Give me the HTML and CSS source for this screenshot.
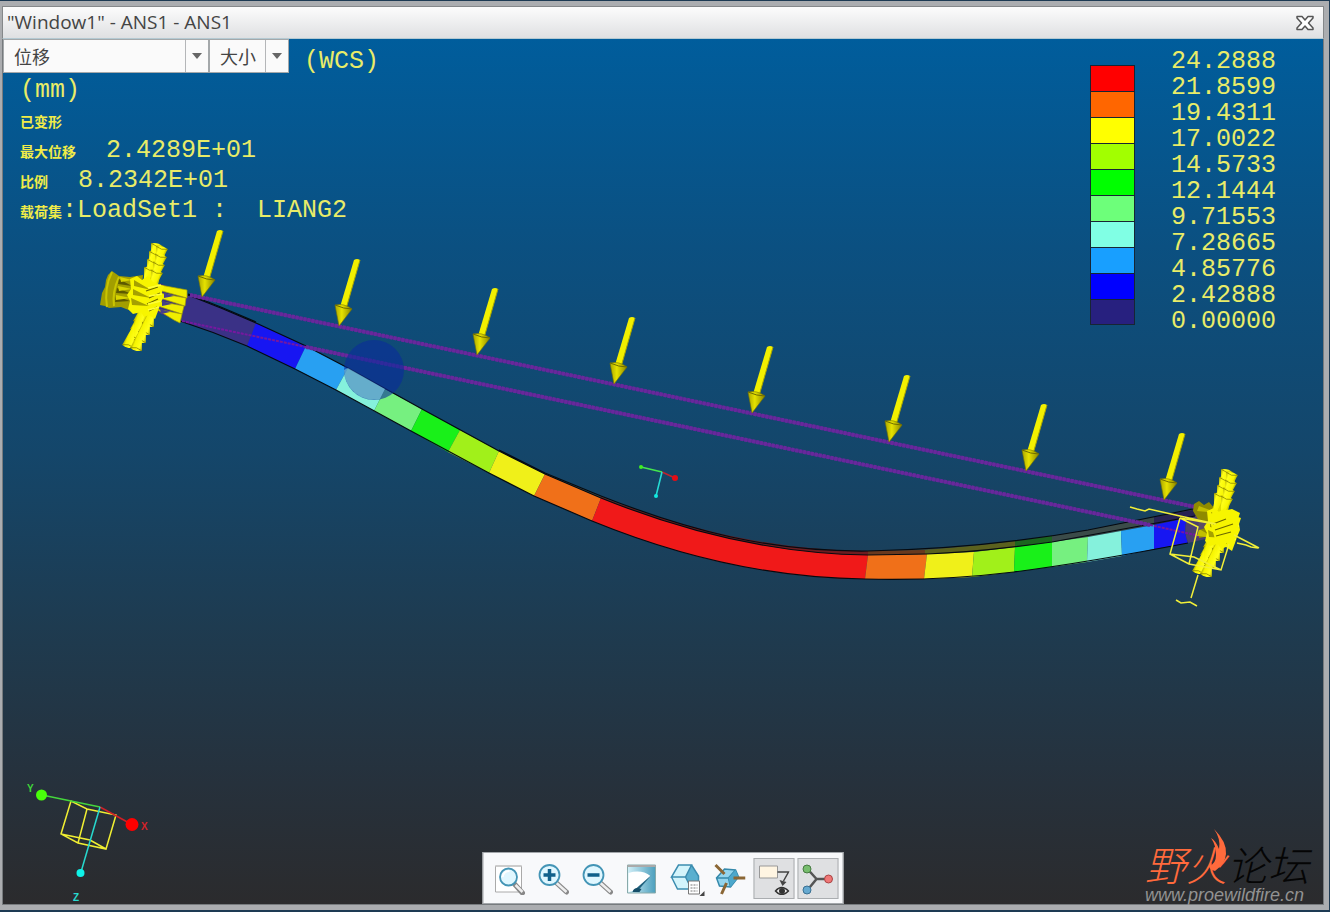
FILE: index.html
```html
<!DOCTYPE html>
<html lang="zh-CN">
<head>
  <meta charset="UTF-8">
  <meta name="viewport" content="width=device-width, initial-scale=1.0">
  <title>"Window1" - ANS1 - ANS1</title>
  <link rel="stylesheet" href="styles.css">
</head>
<body>
  <div class="window">
    <header class="titlebar">
      <h1>"Window1" - ANS1 - ANS1</h1>
      <button type="button" class="close" aria-label="关闭">
        <svg width="18" height="16" viewBox="0 0 18 16"><path d="M1 1.500H6L9 5L12 1.500H17V3L12.500 8L17 13V14.500H12L9 11L6 14.500H1V13L5.500 8L1 3Z" fill="#fff" stroke="#555" stroke-width="1.500" stroke-linejoin="round"/></svg>
      </button>
    </header>

    <main class="viewport">
      <!-- 三维模型 -->
      <svg class="scene" viewBox="3 39 1320 865" aria-hidden="true">
        <defs>
          <linearGradient id="rod" x1="0" x2="1" y1="0" y2=".25">
            <stop offset="0" stop-color="#b5b000"/>
            <stop offset=".3" stop-color="#ffff18"/>
            <stop offset=".75" stop-color="#f6f400"/>
            <stop offset="1" stop-color="#9c9800"/>
          </linearGradient>
          <linearGradient id="head" x1="0" x2="1">
            <stop offset="0" stop-color="#aaa600"/>
            <stop offset=".4" stop-color="#e6e200"/>
            <stop offset="1" stop-color="#8a8600"/>
          </linearGradient>
          <g id="load">
            <path d="M217 231Q220 229 223 231L209 280L203 278Z" fill="#f2f000"/>
            <path d="M223 231L209 280" stroke="#a8a400"/>
            <path d="M198 276Q207 274 215 280L202 297Z" fill="url(#head)" stroke="#777300" stroke-width=".6"/>
            <path d="M198 276Q207 280 215 280" fill="none" stroke="#6f6c00"/>
          </g>
          <g id="cone">
            <path d="M0 0L-6 -23Q0 -26 6 -23Z" fill="url(#rod)"/>
            <path d="M-6 -23Q0 -20 6 -23" fill="none" stroke="#858100" stroke-width=".7"/>
          </g>
          <g id="stack">
            <path d="M152 246L166 250L157 289L142 285Z" fill="#dedb00"/>
            <use href="#cone" transform="translate(151 267) rotate(15)"/>
            <use href="#cone" transform="translate(149 275) rotate(15)"/>
            <use href="#cone" transform="translate(147 283) rotate(15)"/>
            <use href="#cone" transform="translate(144 291) rotate(15)"/>
            <use href="#cone" transform="translate(156 270) rotate(15)"/>
            <use href="#cone" transform="translate(155 278) rotate(15)"/>
            <use href="#cone" transform="translate(153 286) rotate(15)"/>
            <use href="#cone" transform="translate(151 294) rotate(15)"/>
          </g>
          <g id="stack-low">
            <path d="M142 310L156 310L139 349L124 345Z" fill="#dedb00"/>
            <use href="#cone" transform="translate(145 300) rotate(195)"/>
            <use href="#cone" transform="translate(142 308) rotate(195)"/>
            <use href="#cone" transform="translate(139 316) rotate(195)"/>
            <use href="#cone" transform="translate(134 324) rotate(195)"/>
            <use href="#cone" transform="translate(154 303) rotate(195)"/>
            <use href="#cone" transform="translate(150 311) rotate(195)"/>
            <use href="#cone" transform="translate(146 319) rotate(195)"/>
            <use href="#cone" transform="translate(142 327) rotate(195)"/>
          </g>
          <g id="knot">
            <path d="M130 279L137 276L142 280L148 276L153 282L158 284L164 286L162 292L163 298L160 305L158 311L155 319L149 315L144 317L141 312L133 314L128 309L130 301L127 295L131 289Z" fill="#f7f500"/>
            <path d="M134 280L151 290L134 286ZM133 289L151 298L133 295ZM131 298L149 306L132 305Z" fill="#a5a100"/>
            <path d="M146 291L158 287M149 298L160 293M147 304L158 299M149 311L157 307" stroke="#6b6800" stroke-width="1.200"/>
            <path d="M148 288L161 285M149 296L162 294M148 304L161 301M148 310L159 307" stroke="#ffff3a" stroke-width="1.500"/>
          </g>
        </defs>

        <!-- 变形后的梁 -->
        <path d="M545 473L601 496C690 531 770 552 868 551Q980 549 1088 530L1195 509V517L1088 537Q960 557 868 555C780 554 690 534 601 498Z" fill="#3b4b49"/>
        <path d="M601 497C690 531 780 551 868 551V555C780 554 690 534 601 498Z" fill="#6d1c20"/>
        <path d="M868 551L925 550V554L868 555Z" fill="#69391e"/>
        <path d="M925 550Q970 547 1015 541V547Q970 553 925 554Z" fill="#5b611e"/>
        <path d="M1015 541L1052 536V542L1015 547Z" fill="#1c651f"/>
        <path d="M1154 517L1198 509V517L1154 525Z" fill="#272252"/>
        <path d="M160 283L188 295Q222 308 257 323L247 346Q214 332 180 321L155 312Z" fill="#3a3186"/>
        <path d="M256 323L306 346L295 369L247 346Z" fill="#1716f2"/>
        <path d="M306 346L348 368L336 390L295 369Z" fill="#28a0f2"/>
        <path d="M348 368L385 389L374 411L336 390Z" fill="#85f1dc"/>
        <path d="M385 389L422 409L411 431L374 411Z" fill="#76f080"/>
        <path d="M422 409L460 430L448 452L411 431Z" fill="#19f019"/>
        <path d="M460 430L499 451L489 473L448 452Z" fill="#a1f01a"/>
        <path d="M499 451L545 474L534 496L489 473Z" fill="#f0f019"/>
        <path d="M545 474L601 498L592 521L534 496Z" fill="#f07019"/>
        <path d="M601 498C690 534 780 554 868 555L865 579C770 578 680 557 592 521Z" fill="#f01919"/>
        <path d="M868 555L927 554L924 579L865 579Z" fill="#f07019"/>
        <path d="M927 554L974 552L972 577L924 579Z" fill="#f0f019"/>
        <path d="M974 552L1015 547L1014 572L972 577Z" fill="#a1f01a"/>
        <path d="M1015 547L1052 542V567L1014 572Z" fill="#19f019"/>
        <path d="M1052 542L1088 537L1087 562L1052 567Z" fill="#76f080"/>
        <path d="M1088 537L1121 531L1122 556L1087 562Z" fill="#85f1dc"/>
        <path d="M1121 531L1154 525V549L1122 556Z" fill="#28a0f2"/>
        <path d="M1154 525L1187 518Q1183 531 1188 543L1154 549Z" fill="#1716f2"/>
        <path d="M1187 518L1210 512V538L1188 543Q1183 531 1187 518Z" fill="#4b3e70"/>
        <g fill="none" stroke="#050a10" stroke-width="1.200">
          <path d="M188 295Q222 308 256 323L306 346L348 368L422 409L499 451L545 474L601 498C690 534 780 554 868 555L927 554Q980 552 1052 542L1195 516"/>
          <path d="M180 321Q214 332 247 346L295 369L336 390L411 431L489 473L534 496L592 521C680 557 770 578 865 579Q940 581 1014 572Q1090 562 1188 543"/>
          <path d="M188 294Q222 307 256 322M499 450L545 473L601 496C690 531 770 552 868 551Q980 549 1088 530L1198 508"/>
        </g>

        <!-- 原始轮廓 -->
        <path d="M190 295L1205 509M306 347L1150 525" stroke="#5b2a90" stroke-width="3"/>
        <g stroke="#68289c" stroke-width="4" stroke-dasharray="3 1">
          <path d="M190 295L1205 509M306 347L1150 525"/>
          <path d="M182 321L306 347M1150 525L1200 536" stroke-width="2" stroke="#76189f"/>
        </g>
        <circle cx="374" cy="370" r="30" fill="#0a2b9d" fill-opacity=".6"/>
        <path d="M348 368L385 389L380 399A30 30 0 0 1 344 370Z" fill="#8fdfe0" fill-opacity=".5"/>

        <!-- 载荷 -->
        <use href="#load"/>
        <use href="#load" x="137" y="29"/>
        <use href="#load" x="275" y="58"/>
        <use href="#load" x="412" y="87"/>
        <use href="#load" x="550" y="116"/>
        <use href="#load" x="687" y="145"/>
        <use href="#load" x="824" y="174"/>
        <use href="#load" x="962" y="203"/>

        <!-- 左端约束 -->
        <path d="M108 275L112 271L119 276L130 277L143 275L139 314L121 307L109 308L105 306L100 305L102 293L105 287L106 280Z" fill="#a29e00"/>
        <path d="M112 272Q104 288 107 307M119 277Q112 292 114 306" fill="none" stroke="#c9c500" stroke-width="2"/>
        <path d="M119 279L132 286L118 284ZM117 288L132 294L116 293ZM116 296L130 301L115 302Z" fill="#5d5a00"/>
        <path d="M120 277L132 280L121 282ZM118 286L132 289L119 291ZM116 295L131 298L116 300Z" fill="#d8d400"/>
        <use href="#stack-low"/>
        <use href="#stack"/>
        <g fill="#f0ee00" stroke="#a8a400" stroke-width=".7">
          <path d="M160 285L187 290L187 298L162 291Z"/>
          <path d="M159 293L186 298L185 306L160 298Z"/>
          <path d="M157 301L184 306L182 314L158 306Z"/>
          <path d="M156 309L182 314L180 323L174 320Z"/>
        </g>
        <path d="M164 293L174 296L164 298ZM162 301L172 304L162 306ZM160 309L170 312L161 314Z" fill="#47408a"/>
        <use href="#knot"/>

        <!-- 右端约束 -->
        <path d="M1194 504L1199 501L1204 505L1209 502L1220 515L1215 535L1199 538V521L1193 511Z" fill="#8f8b00"/>
        <path d="M1199 506L1218 513L1197 511ZM1199 529L1215 538L1197 536Z" fill="#c2be00"/>
        <path d="M1198 519L1216 525L1199 530Z" fill="#5c4e66"/>
        <use href="#stack-low" x="1070" y="226"/>
        <use href="#stack" x="1070" y="226"/>
        <use href="#knot" x="1077" y="232"/>
        <path d="M1208 514L1232 509L1240 513L1237 522L1239 530L1235 539L1231 545L1224 542L1216 543Z" fill="#f7f500"/>
        <path d="M1213 524L1226 519M1215 530L1233 524M1216 536L1231 532" stroke="#6b6800" stroke-width="1.200"/>
        <g fill="none" stroke="#f2ef38" stroke-width="1.500">
          <path d="M1130 507L1137 509L1145 511L1149 509L1180 516L1216 524M1180 518L1170 554L1189 564L1221 570L1229 544M1180 518L1198 527L1189 564M1170 554L1194 557L1221 570M1180 518L1215 524M1234 535L1259 548M1237 543L1246 545L1251 547L1258 548M1198 575L1191 598M1176 600L1181 603L1190 602L1197 606"/>
        </g>

        <!-- 质心坐标 -->
        <g fill="none" stroke-width="1.500">
          <path d="M662 472L641 467" stroke="#45e64e"/>
          <path d="M662 472L675 478" stroke="#c3232d"/>
          <path d="M662 472L656 496" stroke="#25dcd5"/>
        </g>
        <circle cx="641" cy="467" r="2" fill="#40f020"/>
        <circle cx="675" cy="478" r="3" fill="#e40e16"/>
        <circle cx="656" cy="496" r="2" fill="#10e9e0"/>
      </svg>

      <section class="hud">
        <div class="hud-top">
          <label class="picker picker-wide">
            <select aria-label="结果量"><option>位移</option></select>
          </label>
          <label class="picker">
            <select aria-label="分量"><option>大小</option></select>
          </label>
          <span class="wcs">(WCS)</span>
        </div>
        <div class="info">
          <p>(mm)</p>
          <p><b>已变形</b></p>
          <p><b>最大位移</b>  2.4289E+01</p>
          <p><b>比例</b>  8.2342E+01</p>
          <p><b>载荷集</b>:LoadSet1 :  LIANG2</p>
        </div>
      </section>

      <section class="legend">
        <ul class="bands">
          <li class="band-1"></li>
          <li class="band-2"></li>
          <li class="band-3"></li>
          <li class="band-4"></li>
          <li class="band-5"></li>
          <li class="band-6"></li>
          <li class="band-7"></li>
          <li class="band-8"></li>
          <li class="band-9"></li>
          <li class="band-10"></li>
        </ul>
        <ul class="values">
          <li>24.2888</li>
          <li>21.8599</li>
          <li>19.4311</li>
          <li>17.0022</li>
          <li>14.5733</li>
          <li>12.1444</li>
          <li>9.71553</li>
          <li>7.28665</li>
          <li>4.85776</li>
          <li>2.42888</li>
          <li>0.00000</li>
        </ul>
      </section>

      <svg class="triad" width="130" height="125" viewBox="22 780 130 125">
        <g fill="none" stroke-width="1.500">
          <path d="M71 801L61 834L78 843L106 849L116 815L87 809ZM87 809L78 843M61 834L90 840L106 849" stroke="#f0ee32"/>
          <path d="M100 807L42 795" stroke="#45d63c"/>
          <path d="M100 807L131 824" stroke="#cf2027"/>
          <path d="M100 807L81 872" stroke="#27d9cf"/>
        </g>
        <circle cx="41.500" cy="795" r="5.500" fill="#49ff0a"/>
        <circle cx="132" cy="824.500" r="6.500" fill="#f00"/>
        <circle cx="80.500" cy="873" r="4" fill="#0ff2e8"/>
        <text x="27" y="792" fill="#3fd63a">Y</text>
        <text x="141" y="830" fill="#d4232a">X</text>
        <text x="73" y="901" fill="#27d9cf">Z</text>
      </svg>

      <div class="toolbar">
        <button type="button" aria-label="重新调整">
          <svg viewBox="0 0 32 32"><path d="M2 3H28V29H2Z" fill="#fff" stroke="#aaa"/><path d="M2 3H28" stroke="#ccc" stroke-width="2"/><path d="M21 21L29 30" stroke="#888" stroke-width="5" stroke-linecap="round"/><path d="M22 22L29 29" stroke="#eee" stroke-width="2.500"/><circle cx="15" cy="14" r="8.500" fill="#e0f7ff" stroke="#4495b6" stroke-width="1.800"/><path d="M9 14Q10 8 16 8" fill="none" stroke="#fff" stroke-width="2"/></svg>
        </button>
        <button type="button" aria-label="放大">
          <svg viewBox="0 0 32 32"><path d="M18 19L29 29" stroke="#888" stroke-width="5" stroke-linecap="round"/><path d="M19 20L29 29" stroke="#eee" stroke-width="2.500"/><circle cx="12" cy="12" r="10" fill="#e0f7ff" stroke="#4495b6" stroke-width="1.800"/><path d="M12 6V18M6 12H18" stroke="#11618b" stroke-width="3.500"/></svg>
        </button>
        <button type="button" aria-label="缩小">
          <svg viewBox="0 0 32 32"><path d="M18 19L29 29" stroke="#888" stroke-width="5" stroke-linecap="round"/><path d="M19 20L29 29" stroke="#eee" stroke-width="2.500"/><circle cx="12" cy="12" r="10" fill="#e0f7ff" stroke="#4495b6" stroke-width="1.800"/><path d="M6 12H18" stroke="#11618b" stroke-width="3.500"/></svg>
        </button>
        <button type="button" aria-label="重画">
          <svg viewBox="0 0 32 32"><defs><linearGradient id="paint"><stop offset="0" stop-color="#d3f0f8"/><stop offset="1" stop-color="#4c9fbd"/></linearGradient></defs><path d="M2 2H30V30H2Z" fill="url(#paint)" stroke="#8aa"/><path d="M2 2H30V4H2Z" fill="#aaa"/><path d="M3 10Q16 6 25 13L10 27L3 29Z" fill="#fff"/><path d="M26 12L10 26L13 27Z" fill="#21617d"/><path d="M12 25Q8 25 7 29H14L16 26Z" fill="#164e69"/></svg>
        </button>
        <button type="button" aria-label="显示样式">
          <svg viewBox="0 0 32 32"><path d="M9 2H22L29 13V22L22 26H8L2 14Z" fill="#d3f4fb"/><path d="M22 2L29 13V22L22 26L16 14Z" fill="#5aafcf"/><path d="M9 2H22L16 14H2ZM2 14L8 26H22M16 14L22 26M22 2L29 13V22" fill="none" stroke="#3c8db0" stroke-width="1.500"/><path d="M19 18H30V31H19Z" fill="#fff" stroke="#777"/><path d="M21 22H28M21 25H28M21 28H28" stroke="#777" stroke-dasharray="2 1"/></svg>
          <i class="more"></i>
        </button>
        <button type="button" aria-label="基准显示">
          <svg viewBox="0 0 32 32"><path d="M3 15L11 6L22 7L25 14L17 24L6 23Z" fill="#93d5ed" stroke="#3589ab" stroke-width="1.500"/><path d="M3 15L15 15L22 7M15 15L17 24" fill="none" stroke="#3589ab" stroke-width="1.500"/><path d="M15 15L22 7L25 14L17 24Z" fill="#4da8cc"/><path d="M2 2L11 11M20 15H32M13 20L8 31" stroke="#8b6735" stroke-width="3"/></svg>
        </button>
        <button type="button" class="on" aria-label="注释显示">
          <svg viewBox="0 0 32 32"><path d="M2 3H20V15H2Z" fill="#fff5e2" stroke="#999"/><path d="M20 9H31L26 18" fill="none" stroke="#444" stroke-width="1.500"/><path d="M22 17L29 19L25 23Z" fill="#444"/><path d="M18 28Q24 21 31 28Q24 35 18 28Z" fill="#eee" stroke="#333" stroke-width="1.500"/><circle cx="24.500" cy="28" r="3" fill="#333"/></svg>
        </button>
        <button type="button" class="on" aria-label="旋转中心">
          <svg viewBox="0 0 32 32"><path d="M6 6L15 16L6 27M15 16H26" fill="none" stroke="#555" stroke-width="2.500"/><circle cx="5.500" cy="6" r="4" fill="#77bd6d" stroke="#477a42"/><circle cx="5.500" cy="27" r="4" fill="#66a9d0" stroke="#3b7092"/><circle cx="27" cy="16" r="4" fill="#ef7777" stroke="#a94444"/></svg>
        </button>
      </div>

      <div class="brand">
        <div class="brand-name"><span>野火</span>论坛</div>
        <a href="#">www.proewildfire.cn</a>
        <svg class="flame" width="18" height="44" viewBox="0 0 18 44"><path d="M5 0Q18 13 17 25Q16 35 6 42Q1 41 0 37Q7 35 7 26Q7 16 2 9Q7 12 10 20Q12 10 5 0Z" fill="#ff6a3c"/></svg>
      </div>
    </main>
  </div>
</body>
</html>
```
FILE: styles.css
```css
* {
  box-sizing: border-box;
}
body {
  margin: 0;
  height: 100vh;
  padding: 1px 1px 2px 0;
  background: #1d3a53;
  font-family: "Open Sans", "Noto Sans CJK SC", sans-serif;
}
.window {
  height: 100%;
  display: flex;
  flex-direction: column;
  border: solid #abadb0;
  border-width: 5px 5px 5px 2px;
}
.titlebar {
  height: 33px;
  flex: none;
  display: flex;
  align-items: center;
  justify-content: space-between;
  padding: 0 9px 0 4px;
  border: 1px solid #85888a;
  border-bottom-color: #b4c9d2;
  background: linear-gradient(#fcfcfc, #dfe0e2);
}
.titlebar h1 {
  margin: 0;
  padding-bottom: 2px;
  font-size: 19px;
  line-height: 24px;
  font-weight: normal;
  color: #444;
}
.close {
  display: flex;
  padding: 0;
  border: 0;
  background: none;
}
.viewport {
  flex: 1;
  min-height: 0;
  position: relative;
  display: flex;
  justify-content: space-between;
  align-items: flex-start;
  border: solid #777b7e;
  border-width: 0 1px 1px;
  background: linear-gradient(#005d9c, #0b5081 24%, #14466a 48%, #1e3b50 68%, #26313c 86%, #2b2b2d);
}
.scene {
  position: absolute;
  left: 0;
  top: 0;
  width: 100%;
  height: 100%;
}

/* 左上角文字 */
.hud,
.legend {
  position: relative;
  font-family: "Liberation Mono", "Noto Sans CJK SC", monospace;
  font-size: 25px;
  color: #e9ec68;
}
.hud-top {
  display: flex;
  height: 34px;
}
.picker {
  position: relative;
  width: 80px;
  border: 1px solid #a4a8aa;
  background: #fafafa;
}
.picker-wide {
  width: 206px;
}
.picker select {
  appearance: none;
  width: 100%;
  height: 100%;
  padding: 0 24px 0 10px;
  border: 0;
  background: none;
  font-family: "Noto Sans CJK SC", sans-serif;
  font-size: 18px;
  color: #444;
}
.picker::before {
  content: "";
  position: absolute;
  top: 0;
  bottom: 0;
  right: 22px;
  border-left: 1px solid #b4b6b8;
}
.picker::after {
  content: "";
  position: absolute;
  top: 13px;
  right: 6px;
  border: 5px solid transparent;
  border-top: 6px solid #666;
  border-bottom: 0;
}
.wcs {
  margin-left: 15px;
  line-height: 46px;
}
.info {
  padding: 3px 0 0 17px;
}
.info p {
  margin: 0;
  line-height: 30px;
  height: 30px;
  white-space: pre;
}
.info b {
  font-size: 14px;
  font-weight: bold;
  color: #f0ec48;
}

/* 色标 */
.legend {
  display: flex;
  gap: 36px;
  padding: 10px 47px 0 0;
}
.legend ul {
  margin: 0;
  padding: 0;
  list-style: none;
}
.legend .bands {
  width: 45px;
  margin-top: 16px;
}
.bands li {
  height: 26px;
  border: 1px solid #172534;
  border-bottom: 0;
}
.bands li:last-child {
  border-bottom: 1px solid #172534;
}
.values li {
  height: 26px;
  line-height: 26px;
}
.band-1 { background: #ff0000; }
.band-2 { background: #ff6600; }
.band-3 { background: #ffff00; }
.band-4 { background: #a2ff00; }
.band-5 { background: #00ff00; }
.band-6 { background: #6dff7a; }
.band-7 { background: #80ffe4; }
.band-8 { background: #189fff; }
.band-9 { background: #0000ff; }
.band-10 { background: #27207f; }

.triad {
  position: absolute;
  left: 19px;
  bottom: -1px;
  font: bold 10px "Liberation Sans", sans-serif;
}

/* 工具栏 */
.toolbar {
  position: absolute;
  bottom: 0;
  left: 50%;
  transform: translateX(-50%);
  display: flex;
  gap: 3px;
  padding: 5px 4px 4px 6px;
  border: 1px solid #a2a6aa;
  background: #f8f9fb;
}
.toolbar button {
  position: relative;
  width: 41px;
  height: 41px;
  padding: 3px;
  border: 1px solid transparent;
  background: none;
}
.toolbar svg {
  display: block;
  width: 32px;
  height: 32px;
}
.toolbar .on {
  border-color: #aaadb0;
  background: #dfe0e2;
}
.more {
  position: absolute;
  right: 1px;
  bottom: 2px;
  border-left: 5px solid transparent;
  border-bottom: 5px solid #444;
}

/* 论坛标志 */
.brand {
  position: absolute;
  right: 10px;
  bottom: 0;
  width: 168px;
  font-family: "Liberation Sans", "Noto Sans CJK SC", sans-serif;
  font-style: italic;
}
.brand-name {
  font-size: 41px;
  line-height: 38px;
  font-weight: 300;
  color: #050505;
  white-space: nowrap;
}
.brand-name span {
  color: #ff6a3c;
}
.brand a {
  display: block;
  font-size: 18px;
  line-height: 18px;
  color: #929292;
  text-decoration: none;
}
.flame {
  position: absolute;
  left: 64px;
  top: -19px;
}
```
